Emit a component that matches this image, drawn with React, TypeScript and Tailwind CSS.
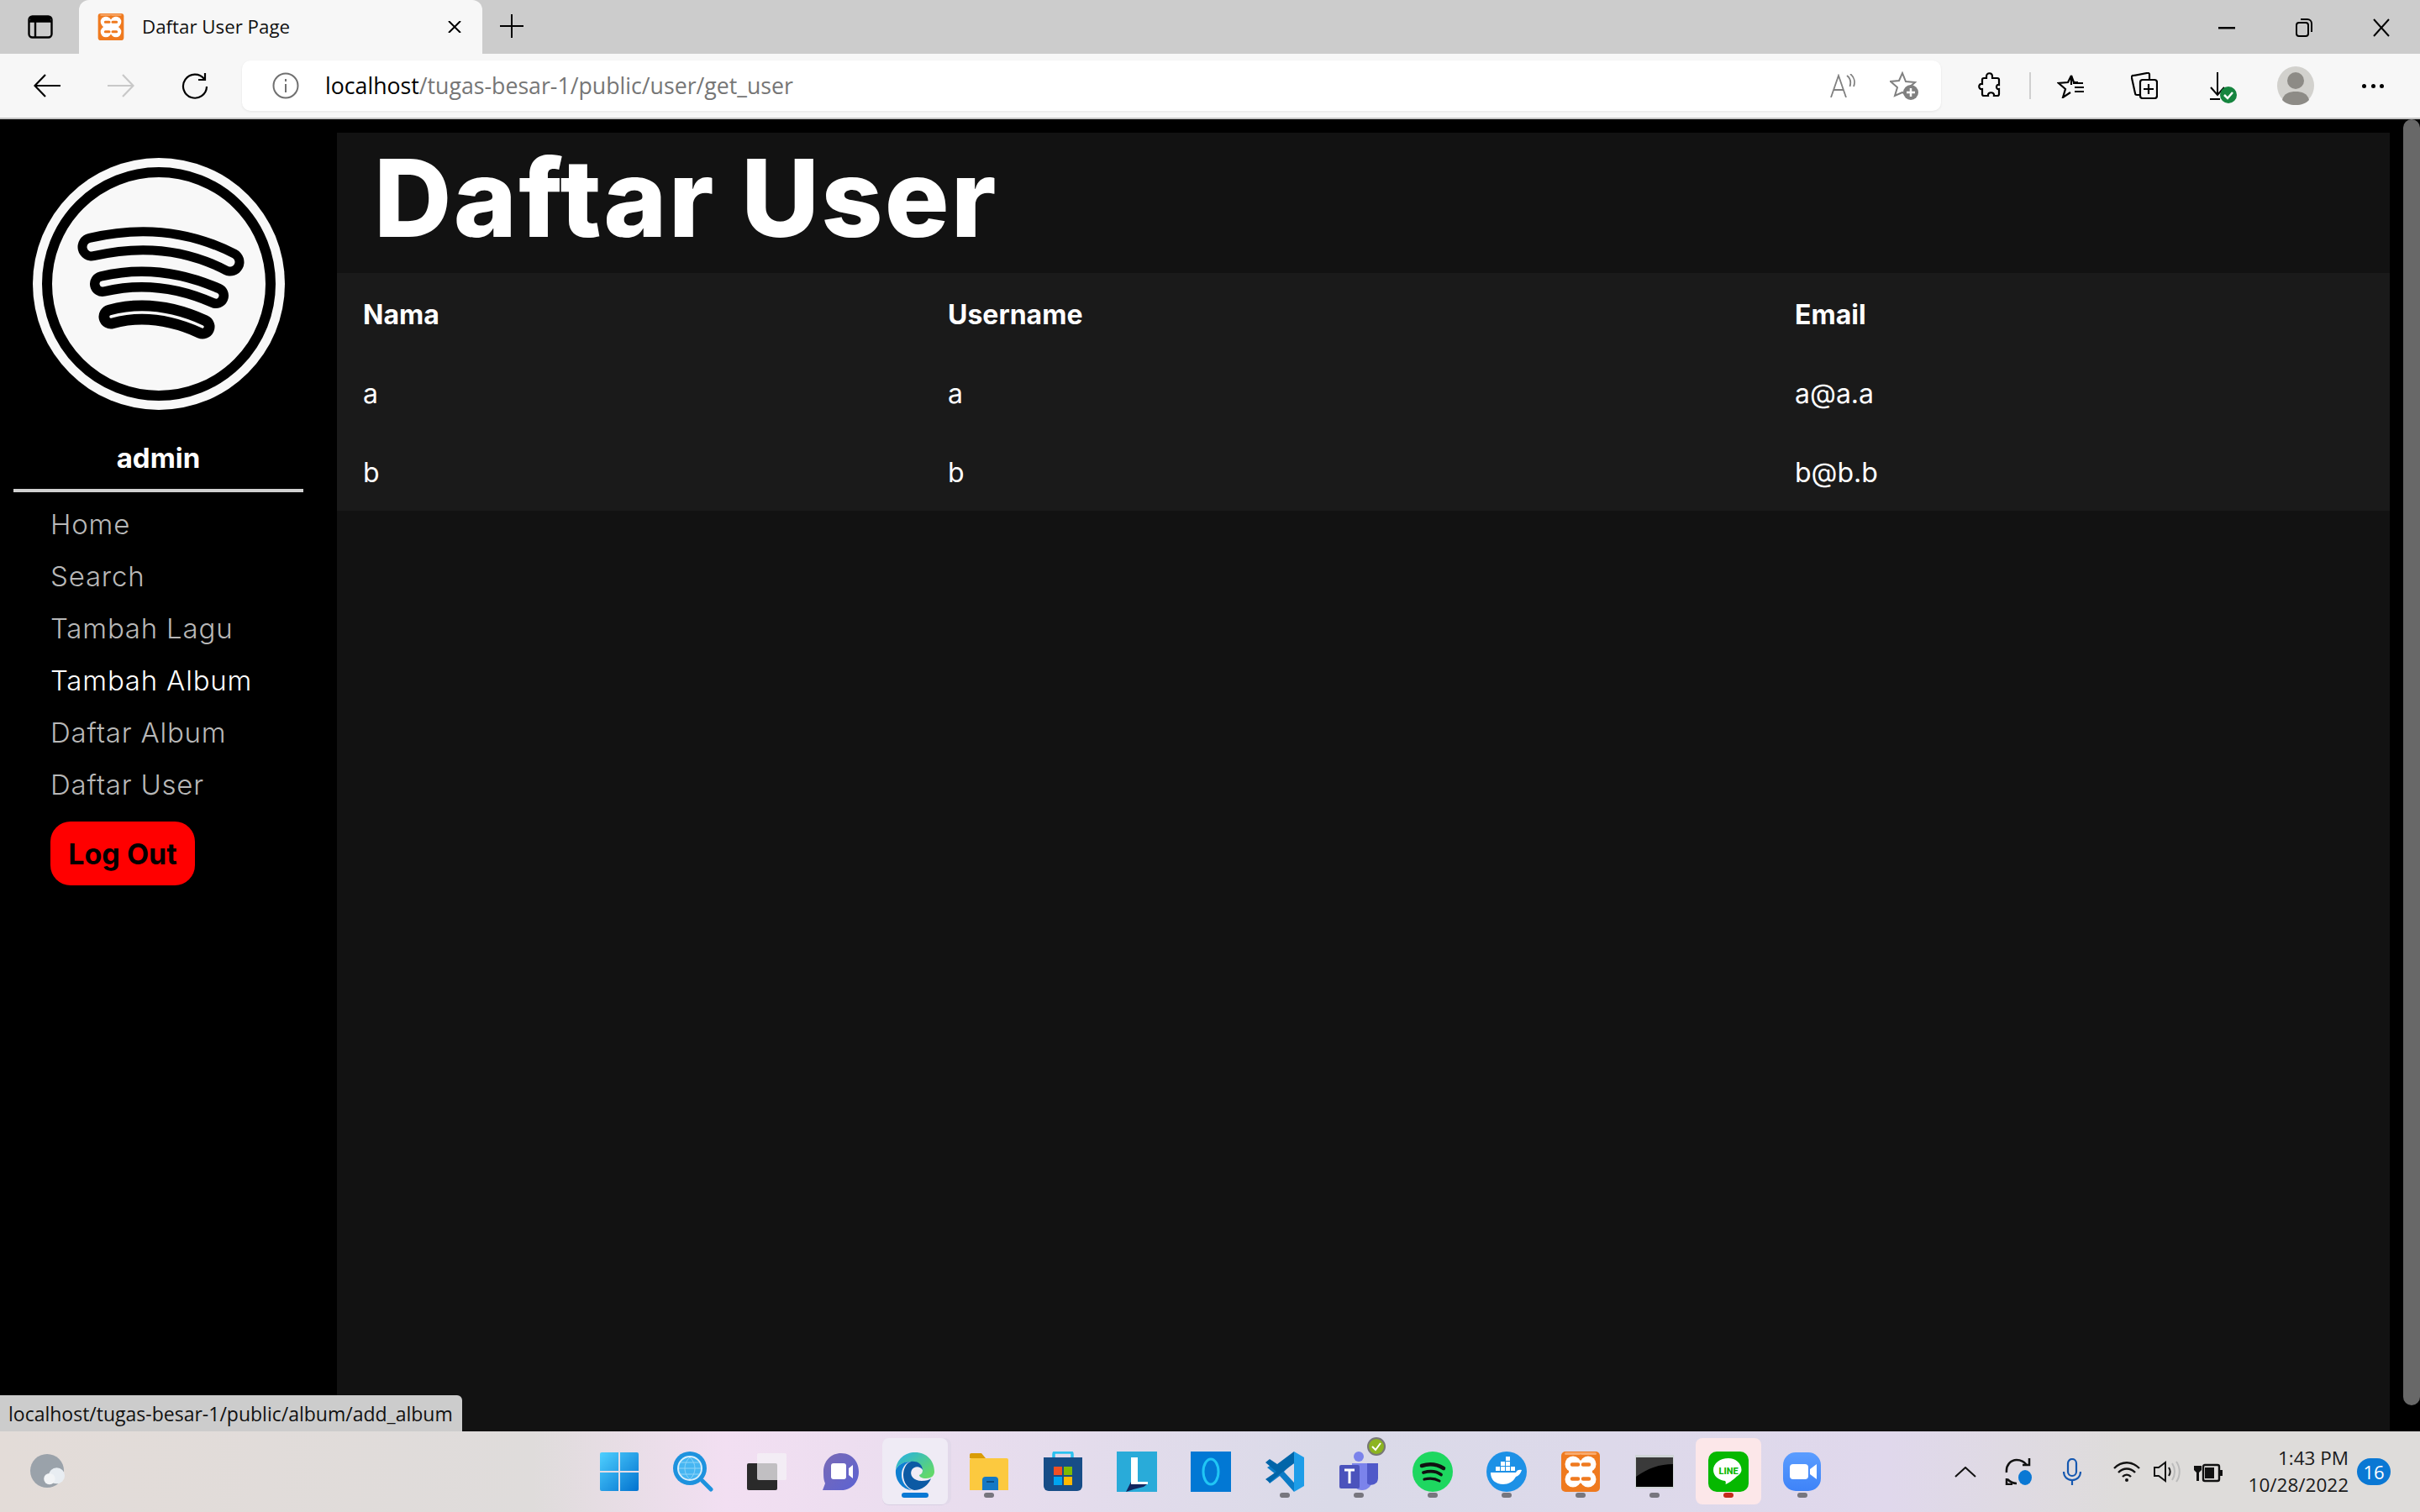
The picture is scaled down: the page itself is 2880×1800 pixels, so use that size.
import React from 'react';

const gotham = 'font-[Inter,"Noto_Sans",sans-serif]';
const segoe = 'font-["Open_Sans","Noto_Sans",sans-serif]';

const XamppIcon = ({ className }: { className: string }) => (
  <svg viewBox="0 0 48 48" className={className}>
    <rect x="1" y="0" width="46" height="48" rx="5" fill="#ef7a1f" />
    <rect x="5" y="1" width="38" height="3" rx="1.500" fill="#f9a96b" />
    <circle cx="15" cy="15" r="9.500" fill="#fff" />
    <circle cx="33" cy="15" r="9.500" fill="#fff" />
    <circle cx="15" cy="33" r="9.500" fill="#fff" />
    <circle cx="33" cy="33" r="9.500" fill="#fff" />
    <rect x="15" y="9" width="18" height="30" fill="#fff" />
    <rect x="10" y="20" width="28" height="8" fill="#fff" />
    <path d="M14 15.500h7M27 15.500h7M14 32.500h7M27 32.500h7" stroke="#ef7a1f" strokeWidth="4.500" strokeLinecap="round" />
    <path d="M24 5v4M24 39v4" stroke="#ef7a1f" strokeWidth="3" strokeLinecap="round" />
  </svg>
);

const SidePanelIcon = () => (
  <svg viewBox="0 0 30 28" className="h-[28px] w-[30px]" fill="none" stroke="#000" strokeWidth="2.400">
    <rect x="1.500" y="1.500" width="27" height="25" rx="4" />
    <path d="M1.500 7.500h27M9 7.500v19" />
    <path d="M3 2h24v5H3z" fill="#000" stroke="none" />
  </svg>
);

const Logo = () => (
  <svg viewBox="0 0 300 300" className="ml-[39px] h-[300px] w-[300px]" fill="none" strokeLinecap="round">
    <circle cx="150" cy="150" r="150" fill="#f8f8f8" />
    <circle cx="150" cy="150" r="133" stroke="#000" strokeWidth="12" />
    <path d="M70 106Q160 85 235 124" stroke="#000" strokeWidth="33" />
    <path d="M70 106Q160 85 235 124" stroke="#f8f8f8" strokeWidth="11" />
    <path d="M83 150Q150 134 218 164" stroke="#000" strokeWidth="30" />
    <path d="M83 150Q150 134 218 164" stroke="#f8f8f8" strokeWidth="7" />
    <path d="M93 189Q145 175 202 201" stroke="#000" strokeWidth="29" />
    <path d="M93 189Q145 175 202 201" stroke="#f8f8f8" strokeWidth="3.500" />
  </svg>
);

const navItems = ['Home', 'Search', 'Tambah Lagu', 'Tambah Album', 'Daftar Album', 'Daftar User'];

const Sidebar = () => (
  <aside className={`w-[401px] shrink-0 bg-black pt-[46px] ${gotham}`}>
    <Logo />
    <div className="mt-[34px] ml-[16px] w-[345px] border-b-[4px] border-[#d0d0d0] pb-[14px] text-center text-[33px] leading-[46px] font-bold text-white">
      admin
    </div>
    <nav className="mt-[7px] ml-[60px] flex flex-col">
      {navItems.map((item) => (
        <a key={item} className={`h-[62px] text-[33px] leading-[62px] font-light tracking-[0.8px] ${item === 'Tambah Album' ? 'text-white' : 'text-[#b8b8b8]'}`}>
          {item}
        </a>
      ))}
    </nav>
    <button className="mt-[13px] ml-[60px] h-[76px] w-[172px] rounded-[24px] bg-[#ff0000] text-[34px] font-bold text-black">Log Out</button>
  </aside>
);

const users = [
  { nama: 'a', username: 'a', email: 'a@a.a' },
  { nama: 'b', username: 'b', email: 'b@b.b' },
];

const tabs = ['w-[696px]', 'w-[1008px]', 'flex-1'];

const Row = ({ cells, head }: { cells: string[]; head?: boolean }) => (
  <div className={`flex h-[94px] items-center text-[32px] text-white ${head ? 'font-bold' : 'font-normal'}`}>
    {cells.map((c, i) => (
      <div key={i} className={`${tabs[i]} pl-[31px]`}>
        {c}
      </div>
    ))}
  </div>
);

const Main = () => (
  <main className={`mt-[16px] flex-1 bg-[#121212] ${gotham}`}>
    <h1 className="flex h-[167px] items-center pb-[12px] pl-[44px] text-[128px] font-extrabold tracking-[2.200px] text-white">Daftar User</h1>
    <div className="h-[283px] bg-[#1a1a1a] pt-[3px]">
      <Row head cells={['Nama', 'Username', 'Email']} />
      {users.map((u) => (
        <Row key={u.nama} cells={[u.nama, u.username, u.email]} />
      ))}
    </div>
  </main>
);

const TabStrip = () => (
  <div className={`flex h-[64px] items-end bg-[#cccccc] ${segoe}`}>
    <div className="ml-[33px] flex h-[64px] w-[30px] items-center">
      <SidePanelIcon />
    </div>
    <div className="ml-[31px] flex h-[64px] w-[480px] items-center rounded-t-[12px] bg-[#f7f7f7] pl-[22px]">
      <XamppIcon className="h-[32px] w-[32px]" />
      <span className="ml-[21px] text-[22.300px] text-[#111]">Daftar User Page</span>
      <svg viewBox="0 0 18 14" className="ml-auto mr-[24px] h-[14px] w-[18px]" stroke="#000" strokeWidth="2">
        <path d="M2 0l14 14M16 0L2 14" />
      </svg>
    </div>
    <svg viewBox="0 0 28 28" className="mb-[19px] ml-[21px] h-[28px] w-[28px]" stroke="#000" strokeWidth="2">
      <path d="M14 0v28M0 14h28" />
    </svg>
    <div className="mb-[20px] ml-auto flex items-center">
      <svg viewBox="0 0 20 4" className="h-[4px] w-[20px]">
        <rect width="20" height="2.500" y="1" fill="#000" />
      </svg>
      <svg viewBox="0 0 20 22" className="ml-[72px] h-[22px] w-[20px]" fill="none" stroke="#000" strokeWidth="2">
        <rect x="1" y="5" width="14" height="16" rx="3" />
        <path d="M6 1h8a5 5 0 0 1 5 5v10" />
      </svg>
      <svg viewBox="0 0 20 22" className="mr-[36px] ml-[72px] h-[22px] w-[20px]" stroke="#000" strokeWidth="2">
        <path d="M1 1l18 20M19 1L1 21" />
      </svg>
    </div>
  </div>
);

const Toolbar = () => (
  <div className={`flex h-[78px] items-start border-b-[2px] border-[#c4c4c4] bg-[#f7f7f7] pt-[8px] ${segoe}`}>
    <div className="flex h-[60px] items-center pl-[40px]">
      <svg viewBox="0 0 32 28" className="h-[28px] w-[32px]" fill="none" stroke="#000" strokeWidth="2.200">
        <path d="M32 14H2M14 1L1.500 14 14 27" />
      </svg>
      <svg viewBox="0 0 32 28" className="ml-[56px] h-[28px] w-[32px]" fill="none" stroke="#c8c8c8" strokeWidth="2.200">
        <path d="M0 14h30M18 1l12.500 13L18 27" />
      </svg>
      <svg viewBox="0 0 32 32" className="ml-[56px] h-[32px] w-[32px]" fill="none" stroke="#000" strokeWidth="2.200">
        <path d="M27 8A14 14 0 1 0 30 17M28 1v8h-8" />
      </svg>
    </div>
    <div className="ml-[40px] flex h-[60px] w-[2022px] items-center rounded-[10px] bg-white pl-[36px] shadow-[0_1px_3px_rgba(0,0,0,0.08)]">
      <svg viewBox="0 0 32 32" className="h-[32px] w-[32px]" fill="none" stroke="#707070" strokeWidth="2">
        <circle cx="16" cy="16" r="14.500" />
        <path d="M16 14v10M16 8v3" />
      </svg>
      <span className="ml-[31px] text-[26.700px] text-[#767676]">
        <span className="text-black">localhost</span>/tugas-besar-1/public/user/get_user
      </span>
      <svg viewBox="0 0 30 28" className="ml-auto h-[28px] w-[30px]" fill="none" stroke="#808080" strokeWidth="1.800">
        <path d="M1 28L10 2l9 26M4.500 19h11M20 2c4 3 5 8 3.500 13M24 0c5 4 6 10 4 15" />
      </svg>
      <svg viewBox="0 0 34 34" className="mr-[27px] ml-[41px] h-[34px] w-[34px]" fill="none" stroke="#808080" strokeWidth="2">
        <path d="M15 2l4 10 11 1-8 7 2 11-9-6-9 4 3-10-8-7 10-1z" />
        <circle cx="25" cy="25" r="9" fill="#808080" stroke="none" />
        <path d="M25 20v10M20 25h10" stroke="#fff" strokeWidth="2.500" />
      </svg>
    </div>
    <div className="flex h-[60px] items-center">
      <svg viewBox="0 0 28 32" className="ml-[43px] h-[32px] w-[28px]" fill="none" stroke="#000" strokeWidth="2.200">
        <path d="M11 5c0-5 7-5 7 0v2h6a2 2 0 0 1 2 2v6c-4-1-4 6 0 5v6a2 2 0 0 1-2 2h-4c1-5-8-5-7 0H8a2 2 0 0 1-2-2v-6c-5 1-5-7 0-6V9a2 2 0 0 1 2-2h3z" />
      </svg>
      <div className="ml-[34px] h-[32px] w-[2px] bg-[#cfcfcf]" />
      <svg viewBox="0 0 32 30" className="ml-[31px] h-[30px] w-[32px]" fill="none" stroke="#000" strokeWidth="2.200">
        <path d="M17 14V3l-4 8-11 1 8 7-3 10 9-6" />
        <path d="M17 3l3 8h5M21 17h11M21 22h11M19 12h12" />
      </svg>
      <svg viewBox="0 0 32 32" className="ml-[56px] h-[32px] w-[32px]" fill="none" stroke="#000" strokeWidth="2.200">
        <path d="M11 27H7a2 2 0 0 1-2-2L1 7a2 2 0 0 1 2-3l16-3a2 2 0 0 1 3 2v5" />
        <rect x="11" y="9" width="20" height="22" rx="3" />
        <path d="M21 14v12M15 20h12" />
      </svg>
      <svg viewBox="0 0 32 38" className="mt-[6px] ml-[62px] h-[38px] w-[32px]" fill="none" stroke="#000" strokeWidth="2">
        <path d="M9 0v26M1 18l8 9 8-9M0 32h12" />
        <circle cx="22" cy="27" r="10" fill="#16853f" stroke="none" />
        <path d="M17 27l4 4 6-7" stroke="#fff" strokeWidth="2.500" />
      </svg>
      <svg viewBox="0 0 44 46" className="ml-[48px] h-[46px] w-[44px]">
        <ellipse cx="22" cy="23" rx="22" ry="23" fill="#d2d1cd" />
        <ellipse cx="22" cy="17" rx="10" ry="10" fill="#8d8b86" />
        <path d="M6 40c2-8 9-10 16-10s14 2 16 10c-4 4-9 6-16 6S10 44 6 40z" fill="#8d8b86" />
      </svg>
      <div className="ml-[57px] flex w-[26px] justify-between">
        <div className="h-[5px] w-[5px] rounded-full bg-black" />
        <div className="h-[5px] w-[5px] rounded-full bg-black" />
        <div className="h-[5px] w-[5px] rounded-full bg-black" />
      </div>
    </div>
  </div>
);

const WindowsIcon = () => (
  <svg viewBox="0 0 48 48" className="h-[48px] w-[48px]">
    <defs>
      <linearGradient id="win" x1="0" y1="0" x2="1" y2="1">
        <stop offset="0" stopColor="#4fd0ff" />
        <stop offset="1" stopColor="#0272cf" />
      </linearGradient>
    </defs>
    <path d="M1 3a2 2 0 0 1 2-2h20v22H1zM25 1h20a2 2 0 0 1 2 2v20H25zM1 25h22v22H3a2 2 0 0 1-2-2zM25 25h22v20a2 2 0 0 1-2 2H25z" fill="url(#win)" />
  </svg>
);

const SearchIcon = () => (
  <svg viewBox="0 0 48 48" className="h-[48px] w-[48px]">
    <circle cx="20" cy="20" r="20" fill="#1e92de" />
    <circle cx="20" cy="20" r="15" fill="#d8eefb" />
    <circle cx="20" cy="20" r="13" fill="#46b6f2" />
    <path d="M20 7c-8 7-8 19 0 26 8-7 8-19 0-26zM7 20h26M9 13h22M9 27h22" stroke="#8fd4f8" strokeWidth="1" fill="none" />
    <path d="M35 35l10 10" stroke="#1e92de" strokeWidth="5" strokeLinecap="round" />
  </svg>
);

const TaskViewIcon = () => (
  <svg viewBox="0 0 48 48" className="h-[48px] w-[48px]">
    <rect x="0" y="14" width="36" height="32" rx="2" fill="#2a2a2a" />
    <rect x="12" y="2" width="35" height="32" rx="2" fill="#f4f2f6" fillOpacity="0.75" />
  </svg>
);

const MeetIcon = () => (
  <svg viewBox="0 0 48 48" className="h-[48px] w-[48px]">
    <defs>
      <linearGradient id="meet" x1="0" y1="0" x2="1" y2="1">
        <stop offset="0" stopColor="#7a6ab5" />
        <stop offset="1" stopColor="#5b63d3" />
      </linearGradient>
    </defs>
    <path d="M24 2c12 0 21 9 21 22s-9 22-21 22H2l3-8C3 34 3 29 3 24 3 11 12 2 24 2z" fill="url(#meet)" />
    <rect x="12" y="14" width="18" height="19" rx="3" fill="#fff" />
    <path d="M33 20l5-4v16l-5-4z" fill="#fff" />
  </svg>
);

const EdgeIcon = () => (
  <svg viewBox="0 0 48 48" className="h-[48px] w-[48px]">
    <defs>
      <linearGradient id="edge" x1="0.2" y1="0" x2="1" y2="0.7">
        <stop offset="0" stopColor="#2cb4d8" />
        <stop offset="1" stopColor="#62d86b" />
      </linearGradient>
    </defs>
    <path d="M1 22C2 9 12 1 24 1c14 0 23 10 23 23 0 5-4 8-10 8-5 0-8-2-8-4 3-1 4-3 4-6 0-6-6-10-13-10C12 12 3 15 1 22z" fill="url(#edge)" />
    <path d="M1 22c3-7 10-10 18-10-8 2-11 9-11 16 0 8 5 15 12 18C9 45 0 35 1 22z" fill="#0f7fd1" />
    <path d="M19 12c6-1 14 2 14 10-3-5-10-5-13 0-3 6 2 13 12 13 5 0 9-1 11-3-3 8-11 14-20 14-7-1-13-9-13-18 0-7 3-14 9-16z" fill="#0c5aa4" />
  </svg>
);

const FolderIcon = () => (
  <svg viewBox="0 0 48 48" className="h-[48px] w-[48px]">
    <path d="M1 4a2 2 0 0 1 2-2h12l5 6H1z" fill="#d99c06" />
    <path d="M1 10a2 2 0 0 1 2-2h42a2 2 0 0 1 2 2v36H1z" fill="#fcc93f" />
    <path d="M16 46V34a4 4 0 0 1 4-4h11a4 4 0 0 1 4 4v12z" fill="#1479c6" />
    <path d="M21 36h9" stroke="#0a4f88" strokeWidth="2" />
  </svg>
);

const StoreIcon = () => (
  <svg viewBox="0 0 48 48" className="h-[48px] w-[48px]">
    <path d="M13 7V3a2 2 0 0 1 2-2h18a2 2 0 0 1 2 2v4" stroke="#2cc1ef" strokeWidth="3.500" fill="none" />
    <path d="M1 7h46v34a6 6 0 0 1-6 6H7a6 6 0 0 1-6-6z" fill="#174d87" />
    <rect x="13" y="18" width="10" height="10" fill="#f25022" />
    <rect x="25" y="18" width="10" height="10" fill="#7fba00" />
    <rect x="13" y="30" width="10" height="10" fill="#00a4ef" />
    <rect x="25" y="30" width="10" height="10" fill="#ffb900" />
  </svg>
);

const LIcon = () => (
  <svg viewBox="0 0 48 48" className="h-[48px] w-[48px]">
    <rect width="48" height="48" fill="#29abd9" />
    <path d="M17 7h8v29h12v3H17z" fill="#fff" />
    <path d="M11 48l6-12v3h19l-4 3-12 3z" fill="#11265f" />
  </svg>
);

const CortanaIcon = () => (
  <svg viewBox="0 0 48 48" className="h-[48px] w-[48px]">
    <rect width="48" height="48" fill="#0278d4" />
    <ellipse cx="24" cy="24" rx="9" ry="15" fill="none" stroke="#20c6f5" strokeWidth="3" />
  </svg>
);

const VsCodeIcon = () => (
  <svg viewBox="0 0 48 48" className="h-[48px] w-[48px]">
    <path d="M35 0l12 7v34l-12 7z" fill="#1e9de8" />
    <path d="M35 0v14L18 24 8 16l-5 3 10 8L3 33l3 5 12-9 17 19 0-11-12-13 12-13V0L14 18z" fill="#0b7bc6" />
    <path d="M35 14L14 30l-8 7-5-4 13-9L1 13l5-4 9 6L35 0z" fill="#0065a9" />
  </svg>
);

const TeamsIcon = () => (
  <svg viewBox="0 0 48 48" className="h-[48px] w-[48px]">
    <circle cx="24" cy="6" r="6" fill="#7b83eb" />
    <path d="M16 14h24v20a12 12 0 0 1-24 0z" fill="#7b83eb" />
    <path d="M34 14h13v18a8 8 0 0 1-13 6z" fill="#5059c9" />
    <rect x="1" y="16" width="24" height="28" rx="2" fill="#4b53bc" />
    <path d="M7 22h12M13 22v16" stroke="#fff" strokeWidth="3" />
  </svg>
);

const SpotifyIcon = () => (
  <svg viewBox="0 0 48 48" className="h-[48px] w-[48px]" fill="none" stroke="#111" strokeLinecap="round">
    <circle cx="24" cy="24" r="24" fill="#1ed760" stroke="none" />
    <path d="M11 17c9-3 18-2 26 3" strokeWidth="4.500" />
    <path d="M13 25c7-2 15-2 21 2.500" strokeWidth="3.800" />
    <path d="M14 33c6-1.500 13-1 18 2" strokeWidth="3.200" />
  </svg>
);

const DockerIcon = () => (
  <svg viewBox="0 0 48 48" className="h-[48px] w-[48px]">
    <circle cx="24" cy="24" r="24" fill="#1d91e6" />
    <path d="M5 25h30c1-3 4-4 7-3-1 4-4 7-7 8-3 6-9 9-15 9-9 0-15-5-15-14z" fill="#fff" />
    <path d="M11 18h5v5h-5zM17 18h5v5h-5zM23 18h5v5h-5zM17 12h5v5h-5zM23 12h5v5h-5zM23 6h5v5h-5zM29 18h5v5h-5z" fill="#fff" />
  </svg>
);

const TerminalIcon = () => (
  <svg viewBox="0 0 48 48" className="h-[48px] w-[48px]">
    <rect x="1" y="4" width="46" height="40" fill="#cfd4d6" />
    <rect x="2" y="7" width="44" height="35" fill="#000" />
    <path d="M2 7h44v8C30 15 16 20 2 30z" fill="#3a3a3a" />
  </svg>
);

const LineIcon = () => (
  <svg viewBox="0 0 48 48" className="h-[48px] w-[48px]">
    <rect width="48" height="48" rx="10" fill="#06b800" />
    <path d="M24 8c-10 0-18 6-18 14 0 7 6 12 14 13 1 .5 1 3 .5 4 3-1 9-5 13-9 4-3 6-5 6-8 0-8-7-14-15.500-14z" fill="#fff" />
    <text x="24" y="27" textAnchor="middle" fontSize="11" fontWeight="800" fontFamily="Roboto" fill="#06b800">
      LINE
    </text>
  </svg>
);

const ZoomIcon = () => (
  <svg viewBox="0 0 48 48" className="h-[48px] w-[48px]">
    <defs>
      <linearGradient id="zoom" x1="0" y1="0" x2="0" y2="1">
        <stop offset="0" stopColor="#5b9dff" />
        <stop offset="1" stopColor="#3e83f8" />
      </linearGradient>
    </defs>
    <rect x="1" y="1" width="45" height="46" rx="15" fill="url(#zoom)" />
    <rect x="9" y="15" width="22" height="18" rx="4" fill="#fff" />
    <path d="M33 21l8-6v18l-8-6z" fill="#fff" />
  </svg>
);

const apps = [
  { icon: <WindowsIcon /> },
  { icon: <SearchIcon /> },
  { icon: <TaskViewIcon /> },
  { icon: <MeetIcon /> },
  { icon: <EdgeIcon />, active: true },
  { icon: <FolderIcon />, dot: true },
  { icon: <StoreIcon /> },
  { icon: <LIcon /> },
  { icon: <CortanaIcon /> },
  { icon: <VsCodeIcon />, dot: true },
  { icon: <TeamsIcon />, dot: true, badge: true },
  { icon: <SpotifyIcon />, dot: true },
  { icon: <DockerIcon />, dot: true },
  { icon: <XamppIcon className="h-[48px] w-[48px]" />, dot: true },
  { icon: <TerminalIcon />, dot: true },
  { icon: <LineIcon />, dot: true, alert: true },
  { icon: <ZoomIcon />, dot: true },
];

const TaskbarApp = ({ app }: { app: (typeof apps)[number] }) => {
  const bg = app.active
    ? 'bg-[#efebf5] rounded-[8px] shadow-[4px_0_0_#e2d9ea,0_1px_0_#d8cfe2]'
    : app.alert
      ? 'bg-[#fce7e9] rounded-[8px]'
      : '';
  return (
    <div className="relative flex h-[96px] w-[88px] justify-center">
      <div className={`mx-[5px] mt-[8px] flex h-[79px] w-[78px] flex-col items-center ${bg}`}>
        <div className="mt-[16px]">{app.icon}</div>
        {app.active && <div className="mt-[1px] h-[6px] w-[32px] rounded-full bg-[#0a78d4]" />}
        {app.dot && <div className={`mt-[1px] h-[6px] w-[12px] rounded-full ${app.alert ? 'bg-[#c42b1c]' : 'bg-[#77767e]'}`} />}
      </div>
      {app.badge && (
        <svg viewBox="0 0 22 22" className="absolute top-[7px] right-[12px] h-[22px] w-[22px]">
          <circle cx="11" cy="11" r="11" fill="#777" />
          <circle cx="11" cy="11" r="9" fill="#8cb420" />
          <path d="M6 11l4 4 6-8" stroke="#fff" strokeWidth="2" fill="none" />
        </svg>
      )}
    </div>
  );
};

const Tray = () => (
  <div className={`ml-auto flex h-[96px] items-center ${segoe}`}>
    <svg viewBox="0 0 26 13" className="h-[13px] w-[26px]" fill="none" stroke="#111" strokeWidth="2">
      <path d="M1 12L13 1l12 11" />
    </svg>
    <svg viewBox="0 0 32 32" className="ml-[34px] h-[32px] w-[32px]" fill="none" stroke="#111" strokeWidth="2.500">
      <path d="M2 17C1 8 7 2 14 2c5 0 9 2 12 6M29 0v8h-8M2 24v7h7M3 25c3 3 6 5 11 5" />
      <ellipse cx="24" cy="23" rx="8" ry="9" fill="#0a78d4" stroke="none" />
    </svg>
    <svg viewBox="0 0 22 32" className="ml-[37px] h-[32px] w-[22px]" fill="none" stroke="#1558b0" strokeWidth="2.200">
      <rect x="6" y="1" width="10" height="20" rx="5" />
      <path d="M1 16c0 6 4 10 10 10s10-4 10-10M11 26v6" />
    </svg>
    <svg viewBox="0 0 32 24" className="ml-[38px] h-[24px] w-[32px]" fill="none" stroke="#111" strokeWidth="2.400">
      <path d="M1 8c9-9 21-9 30 0M6 13c6-6 14-6 20 0M11 18c3-3 7-3 10 0" />
      <circle cx="16" cy="22" r="2" fill="#111" stroke="none" />
    </svg>
    <svg viewBox="0 0 32 26" className="ml-[16px] h-[26px] w-[32px]" fill="none" stroke="#111" strokeWidth="2">
      <path d="M1 8h5l8-6v22l-8-6H1zM18 8c2 3 2 7 0 10" />
      <path d="M22 3c4 6 4 14 0 20M27 1c5 7 5 17 0 24" stroke="#bbb" />
    </svg>
    <svg viewBox="0 0 34 26" className="ml-[16px] h-[26px] w-[34px]">
      <path d="M2 1v5M7 1v5M0 6h9v5l-3 3v10H3V14L0 11z" fill="#111" />
      <rect x="11" y="5" width="19" height="19" rx="2" fill="none" stroke="#111" strokeWidth="2.400" />
      <rect x="13" y="8" width="11" height="13" fill="#111" />
      <rect x="31" y="11" width="3" height="7" fill="#111" />
    </svg>
    <div className="ml-[26px] flex w-[124px] flex-col items-end text-[22.500px] leading-[32px] text-[#1a1a1a]">
      <span>1:43 PM</span>
      <span>10/28/2022</span>
    </div>
    <div className="mr-[35px] ml-[10px] flex h-[32px] w-[40px] items-center justify-center rounded-full bg-[#0a78d4] text-[22px] text-white">16</div>
  </div>
);

const Taskbar = () => (
  <footer className="flex h-[96px] shrink-0 bg-[linear-gradient(90deg,#e3dcd8_0%,#dfdcdb_22%,#f2dff2_30%,#dadae8_55%,#e0d8ec_78%,#dedcda_88%)]">
    <svg viewBox="0 0 44 44" className="mt-[27px] ml-[35px] h-[42px] w-[44px]">
      <ellipse cx="21" cy="21" rx="21" ry="21" fill="#9aa2aa" />
      <circle cx="33" cy="27" r="10" fill="#e8edf2" />
      <circle cx="24" cy="31" r="7" fill="#f2f4f6" />
    </svg>
    <div className="ml-[614px] flex">
      {apps.map((app, i) => (
        <TaskbarApp key={i} app={app} />
      ))}
    </div>
    <Tray />
  </footer>
);

export default function App() {
  return (
    <div className="relative flex h-[1800px] w-[2880px] flex-col overflow-hidden bg-black">
      <TabStrip />
      <Toolbar />
      <div className="flex min-h-0 flex-1">
        <Sidebar />
        <Main />
        <div className="ml-[16px] w-[20px] shrink-0 bg-black">
          <div className="h-[1531px] rounded-b-[10px] rounded-t-[10px] bg-[#686868]" />
        </div>
      </div>
      {/* link preview shown over the page */}
      <div className={`absolute bottom-[96px] left-0 flex h-[43px] w-[550px] items-center rounded-tr-[6px] bg-[#cccccc] pt-[2px] pl-[10px] text-[23px] text-[#111] ${segoe}`}>
        localhost/tugas-besar-1/public/album/add_album
      </div>
      <Taskbar />
    </div>
  );
}
